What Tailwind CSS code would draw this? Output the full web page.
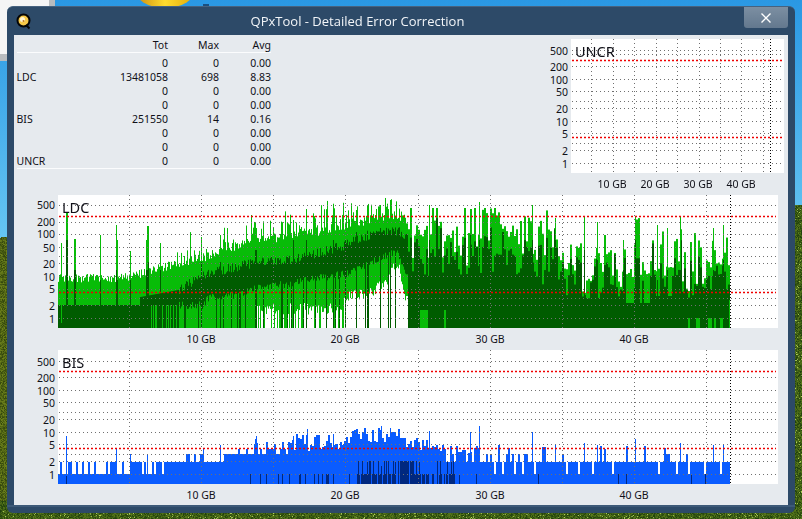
<!DOCTYPE html>
<html lang="en">
<head>
    <meta charset="UTF-8">
    <title>QPxTool - Detailed Error Correction</title>
    <script src="https://cdn.jsdelivr.net/npm/@tailwindcss/browser@4"></script>
</head>

<body class="relative w-[802px] h-[519px] overflow-hidden bg-[#3c5218] font-['Noto_Sans',sans-serif] text-[10.5px] leading-[14px] text-[#101018]">
    <!-- desktop wallpaper -->
    <canvas id="wallpaper" width="802" height="519" class="absolute left-0 top-0"></canvas>

    <!-- window -->
    <div class="absolute left-[7px] top-[6px] w-[788px] h-[507px] flex flex-col rounded-[6px] bg-[#2d4a68] border-t border-[#47627f]">
        <div class="relative h-[28px] shrink-0 flex items-center justify-center pr-[87px]">
            <svg class="absolute left-[9px] top-[6px]" width="16" height="17" viewBox="0 0 16 17">
                <circle cx="7.5" cy="7.5" r="6" fill="#f7c948" stroke="#050505" stroke-width="2"/>
                <circle cx="6.5" cy="6.5" r="2.5" fill="#fff4d0"/>
                <circle cx="7.5" cy="8" r="1" fill="#c07820"/>
                <path d="M10 12l3.5 3.5" stroke="#050505" stroke-width="2"/>
            </svg>
            <span class="font-['Open_Sans',sans-serif] text-[13px] text-[#f2f5f8]">QPxTool - Detailed Error Correction</span>
            <div class="absolute right-[7px] top-0 w-[44px] h-[21px] flex items-center justify-center rounded-b-[3px] bg-gradient-to-b from-[#7c8fa2] to-[#63788e]">
                <svg width="10" height="10" viewBox="0 0 10 10"><path d="M.5.5l9 9M9.5.5l-9 9" stroke="#fff" stroke-width="1.4"/></svg>
            </div>
        </div>

        <div class="mx-[7px] w-[774px] h-[470px] flex flex-col bg-[#e6eaee]">
            <div class="flex h-[160px]">
                <!-- stats table -->
                <div class="ml-[2.5px] mt-[3px] w-[254.5px] h-[132px]">
                    <div class="grid grid-cols-[1fr_51px_52px] h-[15px] pb-[1px] text-right border-b border-[#fbfcfd]">
                        <span>Tot</span><span>Max</span><span>Avg</span>
                    </div>
                    <div class="pt-[3px] border-b border-[#fbfcfd]">
                        <div class="grid grid-cols-[50px_1fr_51px_52px] text-right"><span class="text-left"></span><span>0</span><span>0</span><span>0.00</span></div>
                        <div class="grid grid-cols-[50px_1fr_51px_52px] text-right"><span class="text-left">LDC</span><span>13481058</span><span>698</span><span>8.83</span></div>
                        <div class="grid grid-cols-[50px_1fr_51px_52px] text-right"><span class="text-left"></span><span>0</span><span>0</span><span>0.00</span></div>
                        <div class="grid grid-cols-[50px_1fr_51px_52px] text-right"><span class="text-left"></span><span>0</span><span>0</span><span>0.00</span></div>
                        <div class="grid grid-cols-[50px_1fr_51px_52px] text-right"><span class="text-left">BIS</span><span>251550</span><span>14</span><span>0.16</span></div>
                        <div class="grid grid-cols-[50px_1fr_51px_52px] text-right"><span class="text-left"></span><span>0</span><span>0</span><span>0.00</span></div>
                        <div class="grid grid-cols-[50px_1fr_51px_52px] text-right"><span class="text-left"></span><span>0</span><span>0</span><span>0.00</span></div>
                        <div class="grid grid-cols-[50px_1fr_51px_52px] text-right"><span class="text-left">UNCR</span><span>0</span><span>0</span><span>0.00</span></div>
                    </div>
                </div>
                <!-- UNCR chart -->
                <div class="ml-auto mt-[4px] mr-[4px]">
                    <div class="flex">
                        <div class="relative w-[24px]" data-axis="uncr"></div>
                        <div class="relative w-[213px] h-[134px] bg-white">
                            <canvas id="uncr" width="213" height="134" class="block"></canvas>
                            <span class="absolute left-[4px] top-[3px] text-[14.5px] leading-[18px]">UNCR</span>
                        </div>
                    </div>
                    <div class="relative h-[18px] ml-[24px]" data-xaxis="uncr"></div>
                </div>
            </div>

            <!-- LDC chart -->
            <div class="ml-[10px] h-[155px]">
                <div class="flex">
                    <div class="relative w-[34px]" data-axis="ldc"></div>
                    <div class="relative w-[720px] h-[133px] bg-white">
                        <canvas id="ldc" width="720" height="133" class="block"></canvas>
                        <span class="absolute left-[4px] top-[3px] text-[14.5px] leading-[18px]">LDC</span>
                    </div>
                </div>
                <div class="relative h-[20px] ml-[34px]" data-xaxis="ldc"></div>
            </div>

            <!-- BIS chart -->
            <div class="ml-[10px]">
                <div class="flex">
                    <div class="relative w-[34px]" data-axis="bis"></div>
                    <div class="relative w-[720px] h-[134px] bg-white">
                        <canvas id="bis" width="720" height="134" class="block"></canvas>
                        <span class="absolute left-[4px] top-[3px] text-[14.5px] leading-[18px]">BIS</span>
                    </div>
                </div>
                <div class="relative h-[20px] ml-[34px]" data-xaxis="bis"></div>
            </div>
        </div>
        <div class="h-[2px] bg-[#3d5a78]"></div>
    </div>

    <script>
        // seeded random so every render gives the same trace
        let seed = 20240611;
        function rnd() {
            seed = (seed + 0x6D2B79F5) | 0;
            let t = Math.imul(seed ^ (seed >>> 15), 1 | seed);
            t = (t + Math.imul(t ^ (t >>> 7), 61 | t)) ^ t;
            return ((t ^ (t >>> 14)) >>> 0) / 4294967296;
        }

        // piecewise linear envelope
        function env(pts, x) {
            for (let i = 1; i < pts.length; i++) {
                if (x <= pts[i][0]) {
                    let a = pts[i - 1], b = pts[i];
                    return a[1] + (b[1] - a[1]) * (x - a[0]) / (b[0] - a[0]);
                }
            }
            return pts[pts.length - 1][1];
        }

        const charts = {
            ldc: { left: 58, top: 195, w: 720, h: 133, red: [216, 292.5], hx: [205.3, 222.3, 234.3, 247.3, 256, 263.3, 276.3, 289, 298.3, 305.3, 318.3], vx: [129.5, 201.5, 273.5, 345.5, 418.5, 490.5, 562.5, 634.5, 706.5], end: 730.5,
                   labels: { 500: 205, 200: 222, 100: 234, 50: 248, 20: 264, 10: 277, 5: 289, 2: 306, 1: 319 }, gb: [201, 345, 490, 634] },
            bis: { left: 58, top: 350, w: 720, h: 134, red: [371, 448.3], hx: [361.3, 377.3, 390.3, 402.3, 412.3, 419.3, 432.3, 444.3, 454.3, 461.3, 474.3], vx: [129.5, 201.5, 273.5, 345.5, 418.5, 490.5, 562.5, 634.5, 706.5], end: 730.5,
                   labels: { 500: 362, 200: 378, 100: 391, 50: 403, 20: 420, 10: 433, 5: 445, 2: 462, 1: 475 }, gb: [201, 345, 490, 634] },
            uncr: { left: 571, top: 39, w: 213, h: 134, red: [60, 137.3], hx: [50.7, 54.7, 66.3, 79.7, 91.3, 101.3, 108.3, 121.3, 133.3, 143.3, 150.3, 163.3], vx: [591.5, 613.5, 634.5, 656.5, 677.5, 699.5, 720.5, 741.5, 763.5], end: 770.5,
                   labels: { 500: 51, 200: 67, 100: 80, 50: 92, 20: 109, 10: 122, 5: 134, 2: 151, 1: 164 }, gb: [612, 655, 698, 741] }
        };

        function drawLdc(c) {
            const LT = [[58, 278], [130, 277], [145, 272], [160, 267], [200, 258], [230, 248], [250, 240], [290, 236], [345, 226], [380, 216], [418, 220]];
            const DT = [[58, 305], [139, 305], [140, 297], [178, 290], [200, 277], [230, 268], [260, 262], [300, 258], [345, 245], [375, 232], [400, 232], [418, 245]];
            const DB = [[58, 328], [178, 328], [179, 305], [205, 305], [206, 298], [225, 297], [260, 288], [345, 274], [380, 258], [397, 250], [410, 285], [418, 328]];
            const LB = [[58, 328], [256, 328], [257, 306], [340, 304], [345, 298], [370, 292], [385, 282], [397, 262], [404, 290], [412, 325], [418, 328]];
            const spikes = [[61, 243, 0], [66, 213, 240], [67, 213, 240], [74, 239, 270], [75, 239, 270], [100, 235, 280], [116, 225, 270], [117, 240, 280], [130, 251, 280], [146, 240, 270], [147, 226, 270], [148, 226, 262], [160, 243, 270], [201, 237, 262], [220, 235, 262], [255, 223, 250], [256, 228, 250], [293, 220, 240], [306, 209, 240], [333, 217, 240], [356, 210, 232], [380, 205, 228], [390, 200, 230],
                [429, 205, 240], [479, 202, 240], [470, 209, 235], [532, 205, 240], [584, 217, 250], [635, 216, 240], [680, 216, 270], [723, 225, 260], [713, 228, 270], [555, 218, 240], [597, 222, 260], [623, 240, 270], [657, 225, 280], [667, 228, 270]];
            let lt, dt, db, lb;
            for (let x = 58; x < 730; x++) {
                if (x < 407) {
                    lt = env(LT, x) + rnd() * 9 - 4;
                    if (x > 175 && rnd() < 0.4) lt -= rnd() * rnd() * 32;
                    if (x > 280 && rnd() < 0.25) lt -= rnd() * 16;
                    dt = env(DT, x) + (x > 178 ? rnd() * 10 - 5 : 0);
                    db = env(DB, x) + (x > 178 ? rnd() * 8 - 4 : 0);
                    lb = env(LB, x);
                    if (x > 257 && x < 345) {
                        lb += rnd() * 12 - 2;
                        if (rnd() < (x < 300 ? 0.45 : 0.15)) lb = 328;
                    }
                    if (x >= 345) lb += rnd() * 12 - 6;
                    if (x > 179 && rnd() < 0.09) db = 328;
                    if (x > 150 && x < 178 && rnd() < 0.25) db = 305;
                } else if (x % 2 == 0) {
                    // long dense stretch: bars about two pixels wide
                    let t = x < 530 ? 0 : x < 560 ? 1 : 2;
                    dt = [256, 262, 280][t] + (rnd() * 2 - 1) * [20, 24, 22][t];
                    if (rnd() < 0.25) dt -= rnd() * 26;
                    lt = dt - rnd() * [30, 28, 24][t];
                    if (rnd() < 0.25) lt -= rnd() * 36;
                    if (x < 530 && x % 12 < 6) lt -= 10;
                    lt = Math.max(lt, 208);
                    db = 328;
                    lb = 328;
                    if (x > 620 && x < 650 && rnd() < .5) { dt = 303; lt = 268 + rnd() * 10; }
                    if (x > 655 && x < 672 && rnd() < .4) { dt = 296; lt = 262 + rnd() * 10; }
                    if (x < 445 && rnd() < 0.3) db = 310;
                    if (x > 687 && rnd() < 0.3) db = 318;
                }
                c.fillStyle = "#08bc08";
                c.fillRect(x, lt, 1, lb - lt);
                c.fillStyle = "#005c00";
                c.fillRect(x, dt, 1, db - dt);
            }
            spikes.forEach(s => {
                c.fillStyle = "#08bc08";
                c.fillRect(s[0], s[1], 1, 80);
                if (s[2]) {
                    c.fillStyle = "#005c00";
                    c.fillRect(s[0], s[2], 1, 328 - s[2]);
                }
            });
            c.fillStyle = "#08bc08";
            c.fillRect(729, 300, 1, 28);
        }

        function drawBis(c) {
            const lvl = v => 474.3 - 42 * Math.log10(v);
            let v = 1;
            for (let x = 58; x < 730; x++) {
                let r = rnd();
                // values hold for two pixels, the bars are that wide
                if (x % 2 == 0) {
                    if (x < 130) v = r < 0.38 ? 2 : 1;
                    else if (x < 165) v = r < 0.75 ? 2 : 1;
                    else if (x < 185) v = 2;
                    else if (x < 205) v = r < 0.6 ? 3 : 2;
                    else if (x < 225) v = r < 0.2 ? 3 : 2;
                    else if (x < 250) v = r < 0.75 ? 3 : r < 0.85 ? 4 : 5;
                    else if (x < 290) v = r < 0.45 ? 3 : r < 0.8 ? 4 : 5 + rnd() * 2;
                    else if (x < 345) v = r < 0.5 ? 3.5 + rnd() * 2 : 5 + rnd() * 4;
                    else if (x < 405) v = 5.5 + rnd() * 4.5 + (rnd() < 0.25 ? 3 : 0);
                    else if (x < 440) v = 3.5 + rnd() * 4;
                    else if (x < 480) v = r < 0.55 ? 3 + rnd() * 2 : 2;
                    else if (x < 530) v = r < 0.45 ? 2 : r < 0.55 ? 1 : r < 0.85 ? 3 : 4 + rnd();
                    else v = r < 0.76 ? 2 : r < 0.86 ? 1 : r < 0.93 ? 3 : 4 + rnd();
                }
                let top = Math.round(lvl(v));
                c.fillStyle = "#0a5cff";
                c.fillRect(x, top, 1, 484 - top);
                let dark = 0;
                let q = rnd();
                if (x >= 357 && x < 415) dark = q < 0.4 ? 461 : q < 0.85 ? 474 : 0;
                else if (x >= 415 && x < 460) dark = q < 0.5 ? 474 : q < 0.6 ? 461 : 0;
                else if (x >= 310 && x < 357) dark = q < 0.18 ? 474 : 0;
                else if (x >= 250 && x < 310) dark = q < 0.1 ? 474 : 0;
                else if (x >= 460 && x < 730) dark = q < 0.025 ? 474 : 0;
                if (x == 66) dark = 474;
                if (dark) {
                    c.fillStyle = "#00287f";
                    c.fillRect(x, dark, 1, 484 - dark);
                }
            }
            [[66, 8], [116, 4], [130, 3], [147, 3], [203, 4], [220, 5], [256, 8], [255, 7], [293, 8], [307, 12], [333, 9], [356, 12], [381, 14], [390, 13], [429, 11], [479, 14], [470, 10], [532, 10], [584, 5.5], [635, 7], [680, 5.5], [723, 5], [713, 5], [555, 5], [597, 5]].forEach(s => {
                let top = Math.round(lvl(s[1]));
                c.fillStyle = "#0a5cff";
                c.fillRect(s[0], top, 1, 40);
            });
        }

        function dots(c, x1, y1, x2, y2, color, dash, width) {
            c.strokeStyle = color;
            c.lineWidth = width;
            c.setLineDash(dash);
            c.beginPath();
            c.moveTo(x1, y1);
            c.lineTo(x2, y2);
            c.stroke();
        }

        Object.keys(charts).forEach(name => {
            let d = charts[name];
            let c = document.getElementById(name).getContext("2d");
            c.translate(-d.left, -d.top);
            if (name == "ldc") drawLdc(c);
            if (name == "bis") drawBis(c);
            let right = d.left + d.w - 2;
            d.hx.forEach(y => dots(c, d.left + 1, Math.floor(y) + .5, right, Math.floor(y) + .5, "#707070", [1, 3], 1));
            d.vx.forEach(x => dots(c, x, d.top, x, d.top + d.h, "#707070", [1, 3], 1));
            d.red.forEach(y => dots(c, d.left + 1, Math.floor(y) + .5, right, Math.floor(y) + .5, "#f00000", [2, 2], 1.5));
            dots(c, d.end, d.top, d.end, d.top + d.h, "#000", [1, 2], 1);

            // axis texts
            let ax = document.querySelector('[data-axis="' + name + '"]');
            Object.keys(d.labels).forEach(v => {
                let s = document.createElement("span");
                s.className = "absolute right-[3px] leading-[14px]";
                s.style.top = (d.labels[v] - d.top - 7) + "px";
                s.textContent = v;
                ax.appendChild(s);
            });
            let xa = document.querySelector('[data-xaxis="' + name + '"]');
            d.gb.forEach((x, i) => {
                let s = document.createElement("span");
                s.className = "absolute top-[4px] -translate-x-1/2 whitespace-nowrap leading-[14px]";
                s.style.left = (x - d.left) + "px";
                s.textContent = (i + 1) * 10 + " GB";
                xa.appendChild(s);
            });
        });

        // wallpaper: sky, grass, bits of other windows
        (function () {
            let c = document.getElementById("wallpaper").getContext("2d");
            let sky = c.createLinearGradient(0, 0, 0, 240);
            sky.addColorStop(0, "#2a98e4");
            sky.addColorStop(1, "#66c6f2");
            c.fillStyle = sky;
            c.fillRect(0, 0, 802, 240);
            for (let x = 0; x < 802; x++) {
                let h = 238 - x * 33 / 802;
                for (let y = Math.floor(h); y < 519; y++) {
                    let n = rnd();
                    let r = 50 + n * 60, g = 70 + n * 60, b = 12 + n * 16;
                    if (y > 500 || x > 790) { r -= 18; g -= 6; if (rnd() < .05) { r += 90; g += 90; b += 60; } }
                    c.fillStyle = "rgb(" + (r | 0) + "," + (g | 0) + "," + (b | 0) + ")";
                    c.fillRect(x, y, 1, 1);
                }
            }
            c.fillStyle = "#f5f5f5";
            c.fillRect(0, 0, 49, 54);
            c.fillStyle = "#b9bcbf";
            c.fillRect(49, 0, 6, 6);
            c.fillRect(0, 54, 7, 7);
            let sun = c.createLinearGradient(135, 0, 195, 0);
            sun.addColorStop(0, "#c98a10");
            sun.addColorStop(.5, "#ffdc2e");
            sun.addColorStop(1, "#e0a808");
            c.fillStyle = sun;
            c.beginPath();
            c.ellipse(165, -12, 31, 20, 0, 0, Math.PI * 2);
            c.fill();
            c.fillStyle = "#1a4f80";
            c.fillRect(203, 4, 6, 2);
        })();
    </script>
</body>
</html>
